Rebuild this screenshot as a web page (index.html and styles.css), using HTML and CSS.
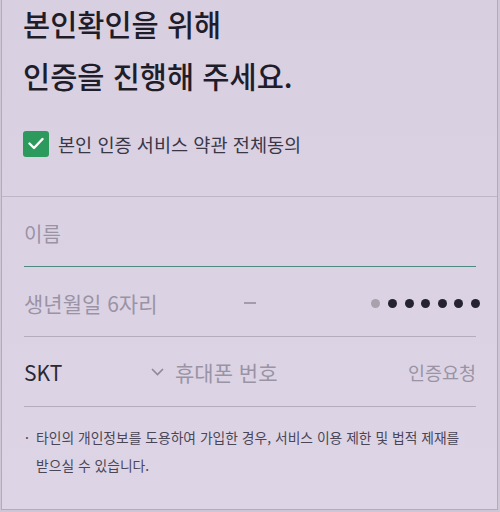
FILE: index.html
```html
<!DOCTYPE html>
<html lang="ko">
<head>
    <meta charset="UTF-8">
    <meta name="viewport" content="width=device-width, initial-scale=1.0">
    <title>본인확인</title>
    <link rel="stylesheet" href="styles.css">
</head>
<body>

    <div class="screen">
        <div class="intro">
            <h1 class="title">본인확인을 위해<br>인증을 진행해 주세요.</h1>

            <label class="agree">
                <span class="checkbox">
                    <svg width="16" height="13" viewBox="0 0 16 13">
                        <polyline points="1.5,6.5 6,11 14.5,2" fill="none" stroke="#fff" stroke-width="2.4" stroke-linecap="round" stroke-linejoin="round"/>
                    </svg>
                </span>
                본인 인증 서비스 약관 전체동의
            </label>
        </div>

        <div class="form">
            <div class="field field-active">
                <span class="placeholder">이름</span>
            </div>

            <div class="field birth">
                <span class="placeholder">생년월일 6자리</span>
                <span class="dash"></span>
                <span class="dots">
                    <i class="dot dot-empty"></i>
                    <i class="dot"></i>
                    <i class="dot"></i>
                    <i class="dot"></i>
                    <i class="dot"></i>
                    <i class="dot"></i>
                    <i class="dot"></i>
                </span>
            </div>

            <div class="field phone">
                <span class="carrier">SKT</span>
                <svg class="chevron" width="13" height="8" viewBox="0 0 13 8">
                    <polyline points="1,1 6.5,6.5 12,1" fill="none" stroke="#8f8899" stroke-width="1.6"/>
                </svg>
                <span class="placeholder phone-number">휴대폰 번호</span>
                <span class="request">인증요청</span>
            </div>

            <p class="notice">타인의 개인정보를 도용하여 가입한 경우, 서비스 이용 제한 및 법적 제재를 받으실 수 있습니다.</p>
        </div>
    </div>

</body>
</html>
```

FILE: styles.css
```css
html, body {
    margin: 0;
    padding: 0;
    height: 100%;
    background-color: #cfc7d6;
}

body {
    font-family: "Noto Sans CJK KR", "Noto Sans", sans-serif;
    color: #23212c;
}

.screen {
    box-sizing: border-box;
    height: 510px;
    margin: 0 2px 2px 1px;
    border: 1px solid #b3abb9;
    border-top: none;
    background: linear-gradient(#d8cfe1, #ddd5e6);
    overflow: hidden;
}

.intro {
    padding: 0 21px;
    border-bottom: 1px solid #bfb7c8;
}

.title {
    margin: -3px 0 0;
    font-size: 29.5px;
    font-weight: 500;
    line-height: 52px;
    color: #1f1d2a;
}

.agree {
    display: flex;
    align-items: center;
    gap: 9px;
    margin: 29px 0 39px;
    font-size: 18.6px;
    color: #3a3746;
}

.checkbox {
    display: flex;
    align-items: center;
    justify-content: center;
    width: 26px;
    height: 26px;
    border-radius: 3px;
    background-color: #2b9a5c;
}

.form {
    padding: 0 21px 0 22px;
}

.field {
    display: flex;
    align-items: center;
    height: 70px;
    box-sizing: border-box;
    border-bottom: 1px solid #b5adbe;
}

.field-active {
    padding-top: 3px;
    border-bottom: 1.5px solid #4f8a80;
}

.placeholder {
    font-size: 20px;
    color: #9a93a4;
}

.birth {
    display: grid;
    grid-template-columns: 1fr auto 1fr;
    padding-top: 3px;
}

.birth .placeholder {
    font-size: 21px;
}

.dash {
    width: 12px;
    height: 1.5px;
    background-color: #a39cab;
}

.dots {
    display: flex;
    justify-content: flex-end;
    gap: 7.6px;
    margin-right: -4px;
}

.dot {
    width: 9px;
    height: 9px;
    border-radius: 50%;
    background-color: #25232f;
}

.dot-empty {
    background-color: #a8a2ae;
}

.carrier {
    width: 127px;
    font-size: 21px;
    color: #2a2835;
}

.chevron {
    margin-right: 11px;
}

.phone-number {
    flex: 1;
    font-size: 21px;
}

.request {
    font-size: 18.5px;
    color: #9a93a4;
}

.notice {
    position: relative;
    margin: 16px 0 0;
    padding: 0 8px 0 12px;
    font-size: 13.8px;
    line-height: 28px;
    word-break: keep-all;
    color: #4a4656;
}

.notice::before {
    content: "·";
    position: absolute;
    left: 1px;
    top: 0;
}
```
